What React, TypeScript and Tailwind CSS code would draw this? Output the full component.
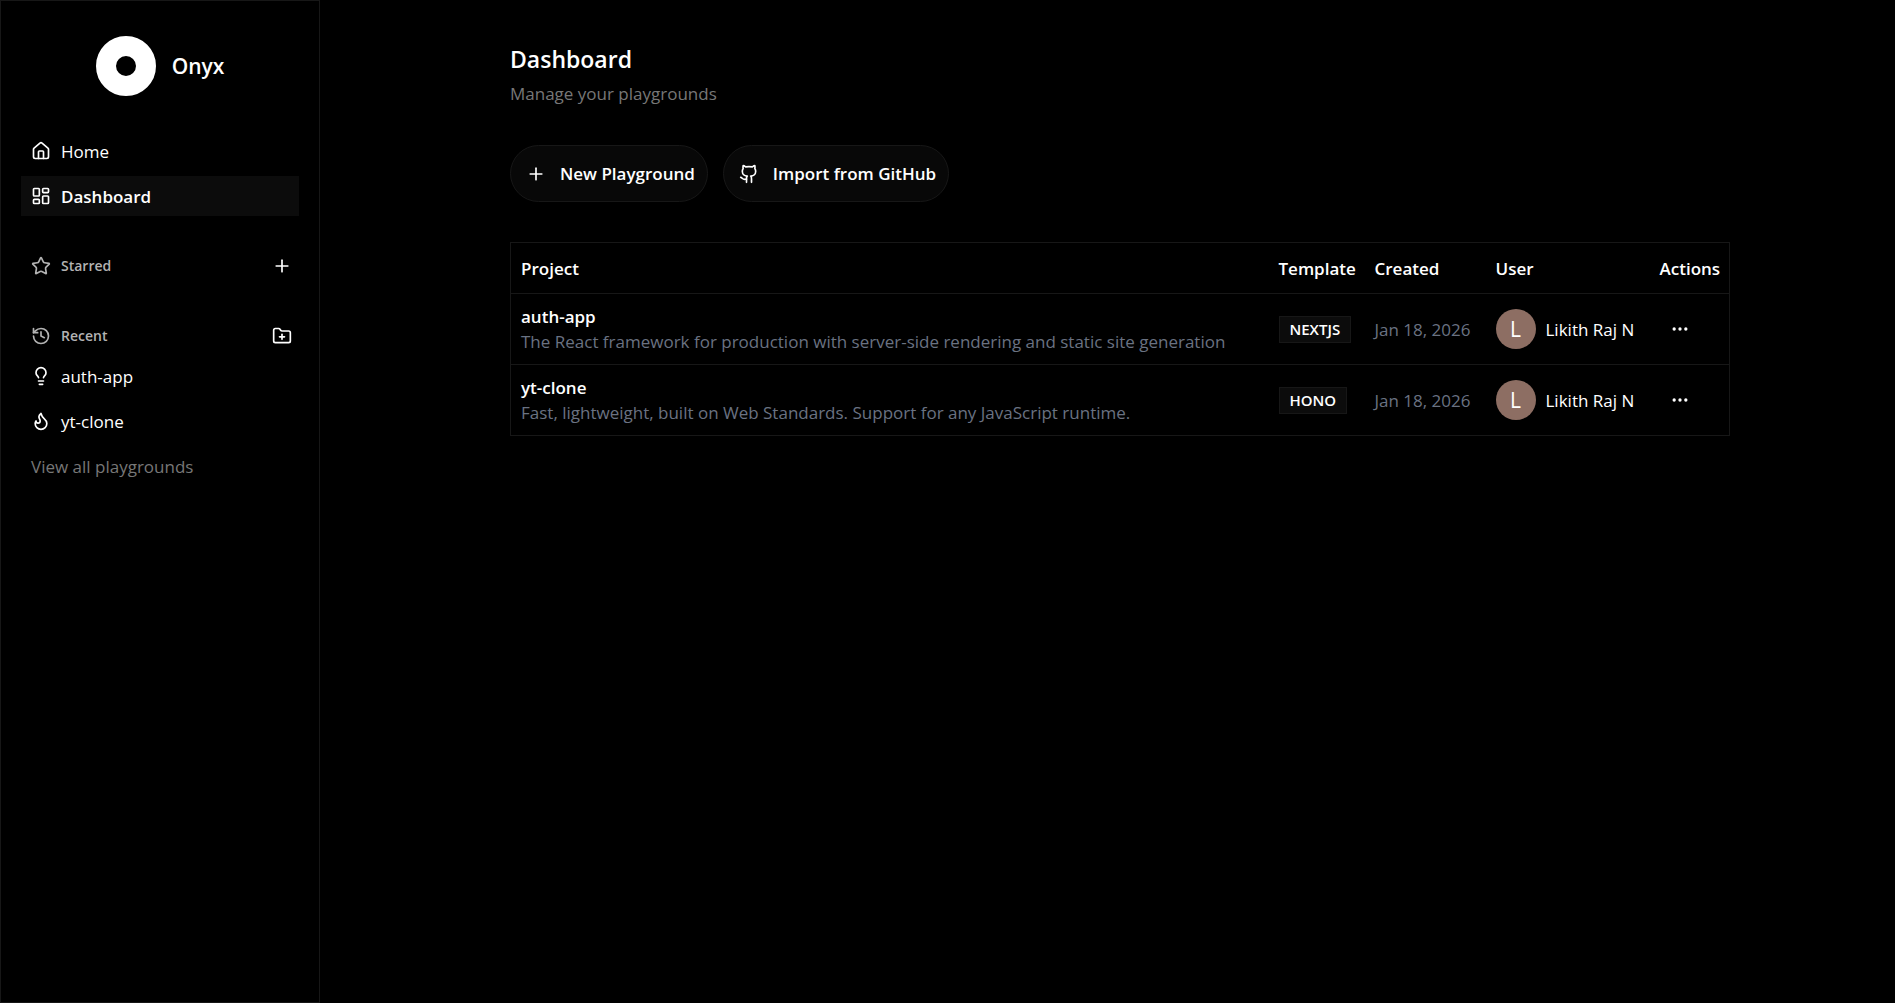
import {
  Ellipsis,
  Flame,
  FolderPlus,
  Github,
  History,
  House,
  LayoutDashboard,
  Lightbulb,
  Plus,
  Star,
  type LucideIcon,
} from 'lucide-react'

type Project = {
  name: string
  description: string
  template: string
  created: string
  user: string
  icon: LucideIcon
}

const PROJECTS: Project[] = [
  {
    name: 'auth-app',
    description: 'The React framework for production with server-side rendering and static site generation',
    template: 'NEXTJS',
    created: 'Jan 18, 2026',
    user: 'Likith Raj N',
    icon: Lightbulb,
  },
  {
    name: 'yt-clone',
    description: 'Fast, lightweight, built on Web Standards. Support for any JavaScript runtime.',
    template: 'HONO',
    created: 'Jan 18, 2026',
    user: 'Likith Raj N',
    icon: Flame,
  },
]

export default function App() {
  return (
    <div className="flex min-h-screen bg-black font-['Open_Sans','Noto_Sans',sans-serif] text-[17px] leading-[25px] text-white">
      <Sidebar />
      <main className="flex min-w-0 flex-1 justify-center pt-[43px] pr-[15px] pl-10">
        <div className="w-full max-w-[1220px]">
          <h1 className="text-[23px] leading-8 font-semibold">Dashboard</h1>
          <p className="mt-1.5 text-[#777777]">Manage your playgrounds</p>

          <div className="mt-[39px] flex flex-wrap gap-[15px]">
            <ActionButton icon={Plus} label="New Playground" />
            <ActionButton icon={Github} label="Import from GitHub" />
          </div>

          <ProjectTable />
        </div>
      </main>
    </div>
  )
}

function Sidebar() {
  return (
    <aside className="flex w-80 shrink-0 flex-col border border-[#171717] px-5 pt-[35px]">
      <div className="flex items-center justify-center gap-4">
        <Logo />
        <span className="text-[21px] font-semibold">Onyx</span>
      </div>

      <nav className="mt-[35px] flex flex-col gap-[5px]">
        <NavItem icon={House} label="Home" />
        <NavItem icon={LayoutDashboard} label="Dashboard" active />
      </nav>

      <section className="mt-[30px]">
        <GroupLabel icon={Star} label="Starred" action={Plus} actionLabel="Add starred" />
      </section>

      <section className="mt-[30px]">
        <GroupLabel icon={History} label="Recent" action={FolderPlus} actionLabel="New playground" />
        <div className="flex flex-col gap-[5px]">
          {PROJECTS.map(p => (
            <NavItem key={p.name} icon={p.icon} label={p.name} />
          ))}
          <a href="#" className="flex h-10 items-center px-2.5 text-[#777777]">
            View all playgrounds
          </a>
        </div>
      </section>
    </aside>
  )
}

function Logo() {
  return (
    <svg viewBox="0 0 60 60" className="size-[60px]" aria-hidden="true">
      <circle cx="30" cy="30" r="20" fill="none" stroke="#fff" strokeWidth="20" />
    </svg>
  )
}

function NavItem({ icon: Icon, label, active }: { icon: LucideIcon; label: string; active?: boolean }) {
  return (
    <a
      href="#"
      className={`flex h-10 items-center gap-2.5 px-2.5 ${active ? 'bg-[#0c0c0c] font-semibold' : ''}`}
    >
      <Icon className="size-5" />
      {label}
    </a>
  )
}

function GroupLabel({
  icon: Icon, label, action: Action, actionLabel,
}: { icon: LucideIcon; label: string; action: LucideIcon; actionLabel: string }) {
  return (
    <div className="flex h-10 items-center gap-2.5 pr-[7px] pl-2.5">
      <Icon className="size-5 text-[#b3b3b3]" />
      <h2 className="flex-1 text-sm font-semibold text-[#b3b3b3]">{label}</h2>
      <button type="button" aria-label={actionLabel}>
        <Action className="size-5" />
      </button>
    </div>
  )
}

function ActionButton({ icon: Icon, label }: { icon: LucideIcon; label: string }) {
  return (
    <button
      type="button"
      className="flex h-[57px] items-center gap-3.5 rounded-full border border-[#171717] bg-[#080808] pr-3 pl-[15px] font-semibold"
    >
      <Icon className="size-5" />
      {label}
    </button>
  )
}

function ProjectTable() {
  return (
    <table className="mt-10 w-full table-fixed border-collapse border border-[#171717] text-left">
      <thead>
        <tr className="h-[51px] border-b border-[#171717]">
          <th className="px-2.5 font-semibold">Project</th>
          <th className="w-24 px-2.5 font-semibold">Template</th>
          <th className="w-[121px] px-2.5 font-semibold">Created</th>
          <th className="w-[164px] px-2.5 font-semibold">User</th>
          <th className="w-20 px-2.5 font-semibold">Actions</th>
        </tr>
      </thead>
      <tbody>
        {PROJECTS.map(p => (
          <tr key={p.name} className="h-[71px] border-b border-[#171717]">
            <td className="px-2.5">
              <a href="#" className="block font-semibold">{p.name}</a>
              <span className="block font-medium text-gray-500">{p.description}</span>
            </td>
            <td className="px-2.5">
              <span className="inline-block border border-[#171717] bg-[#0c0c0c] px-2.5 align-middle text-[15px] font-semibold">
                {p.template}
              </span>
            </td>
            <td className="px-2.5 whitespace-nowrap text-gray-500">{p.created}</td>
            <td className="px-2.5">
              <div className="flex items-center gap-2.5 whitespace-nowrap">
                <span className="flex size-10 shrink-0 items-center justify-center rounded-full bg-[#8d6e63] text-[21px]">
                  {p.user[0]}
                </span>
                {p.user}
              </div>
            </td>
            <td className="px-2.5">
              <button type="button" aria-label={`Actions for ${p.name}`} className="flex size-10 items-center justify-center">
                <Ellipsis className="size-5" />
              </button>
            </td>
          </tr>
        ))}
      </tbody>
    </table>
  )
}
